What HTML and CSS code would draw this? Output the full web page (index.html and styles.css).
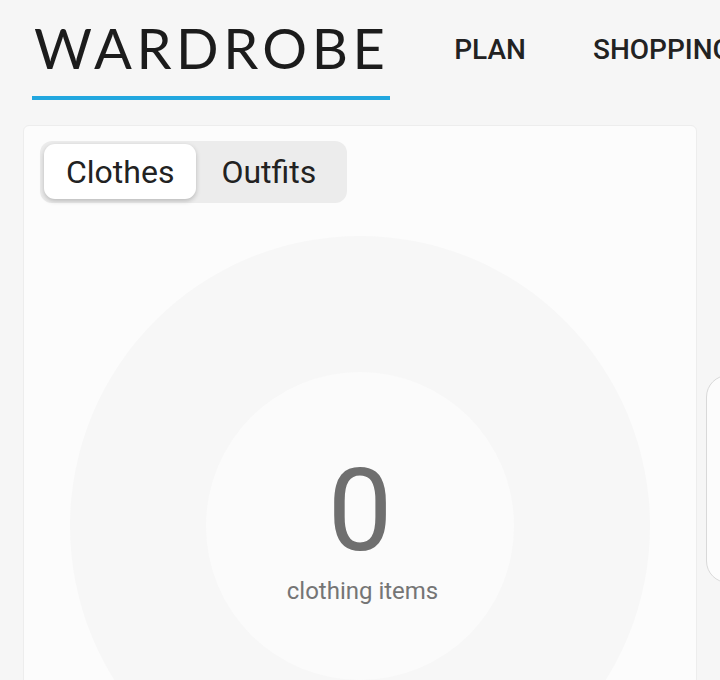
FILE: index.html
```html
<!DOCTYPE html>
<html>
<head>
  <meta charset="UTF-8">
  <title>Wardrobe</title>
  <link rel="stylesheet" href="styles.css">
</head>
<body>
<div class="header">
  <a href="javascript:;" class="logo">WARDROBE</a>
  <div class="nav">
    <a href="javascript:;">PLAN</a>
    <a href="javascript:;">SHOPPING</a>
  </div>
</div>
<div class="main">
  <div class="card">
    <div class="tabs">
      <a href="javascript:;" class="tab active">Clothes</a>
      <a href="javascript:;" class="tab">Outfits</a>
    </div>
    <div class="ring">
      <div class="core">
        <div class="count">0</div>
        <div class="label">clothing items</div>
      </div>
    </div>
  </div>
  <div class="side"></div>
</div>
</body>
</html>
```

FILE: styles.css
```css
* {
  margin: 0;
  padding: 0;
  box-sizing: border-box;
}
html, body {
  height: 100%;
}
body {
  background: #f6f6f6;
  font-family: Roboto, "Liberation Sans", sans-serif;
  color: #222;
  overflow: hidden;
}
a {
  text-decoration: none;
  color: inherit;
}
.header {
  display: flex;
  align-items: flex-start;
  padding: 20px 0 0 32px;
  white-space: nowrap;
}
.logo {
  font-family: Lato, "Open Sans", sans-serif;
  font-size: 56px;
  line-height: 1;
  letter-spacing: 4.5px;
  color: #1c1c1c;
  padding: 0 1px 20px 2px;
  border-bottom: 4px solid #22a7df;
}
.nav {
  display: flex;
  gap: 67px;
  margin: 16px 0 0 64px;
}
.nav > a {
  font-size: 28px;
  line-height: 1;
  font-weight: 500;
  color: #222;
}
.main {
  display: flex;
  gap: 9px;
  padding: 25px 0 0 23px;
}
.card {
  flex-shrink: 0;
  width: 674px;
  height: 700px;
  background: #fcfcfc;
  border: 1px solid #ededed;
  border-radius: 6px;
  padding: 15px 0 0 16px;
}
.tabs {
  display: inline-flex;
  gap: 3px;
  background: #ececec;
  border-radius: 12px;
  padding: 3px 9px 4px 4px;
}
.tab {
  display: flex;
  align-items: center;
  height: 55px;
  padding: 0 22px;
  font-size: 32px;
  color: #222;
  border-radius: 11px;
}
.tab.active {
  background: #fff;
  box-shadow: 0 2px 5px rgba(0, 0, 0, 0.22);
}
.ring {
  width: 580px;
  height: 580px;
  margin: 33px 0 0 30px;
  border-radius: 50%;
  background: #f7f7f7;
  padding: 136px;
}
.core {
  width: 308px;
  height: 308px;
  border-radius: 50%;
  background: #fbfbfb;
  padding-top: 81px;
  text-align: center;
}
.count {
  font-size: 115px;
  line-height: 1;
  color: #6f6f6f;
}
.label {
  margin-top: 9px;
  padding-left: 5px;
  font-size: 24px;
  line-height: 1.2;
  color: #757575;
}
.side {
  flex-shrink: 0;
  width: 300px;
  height: 208px;
  margin-top: 250px;
  background: #fcfcfc;
  border: 1px solid #d9d9d9;
  border-radius: 22px;
}
```
